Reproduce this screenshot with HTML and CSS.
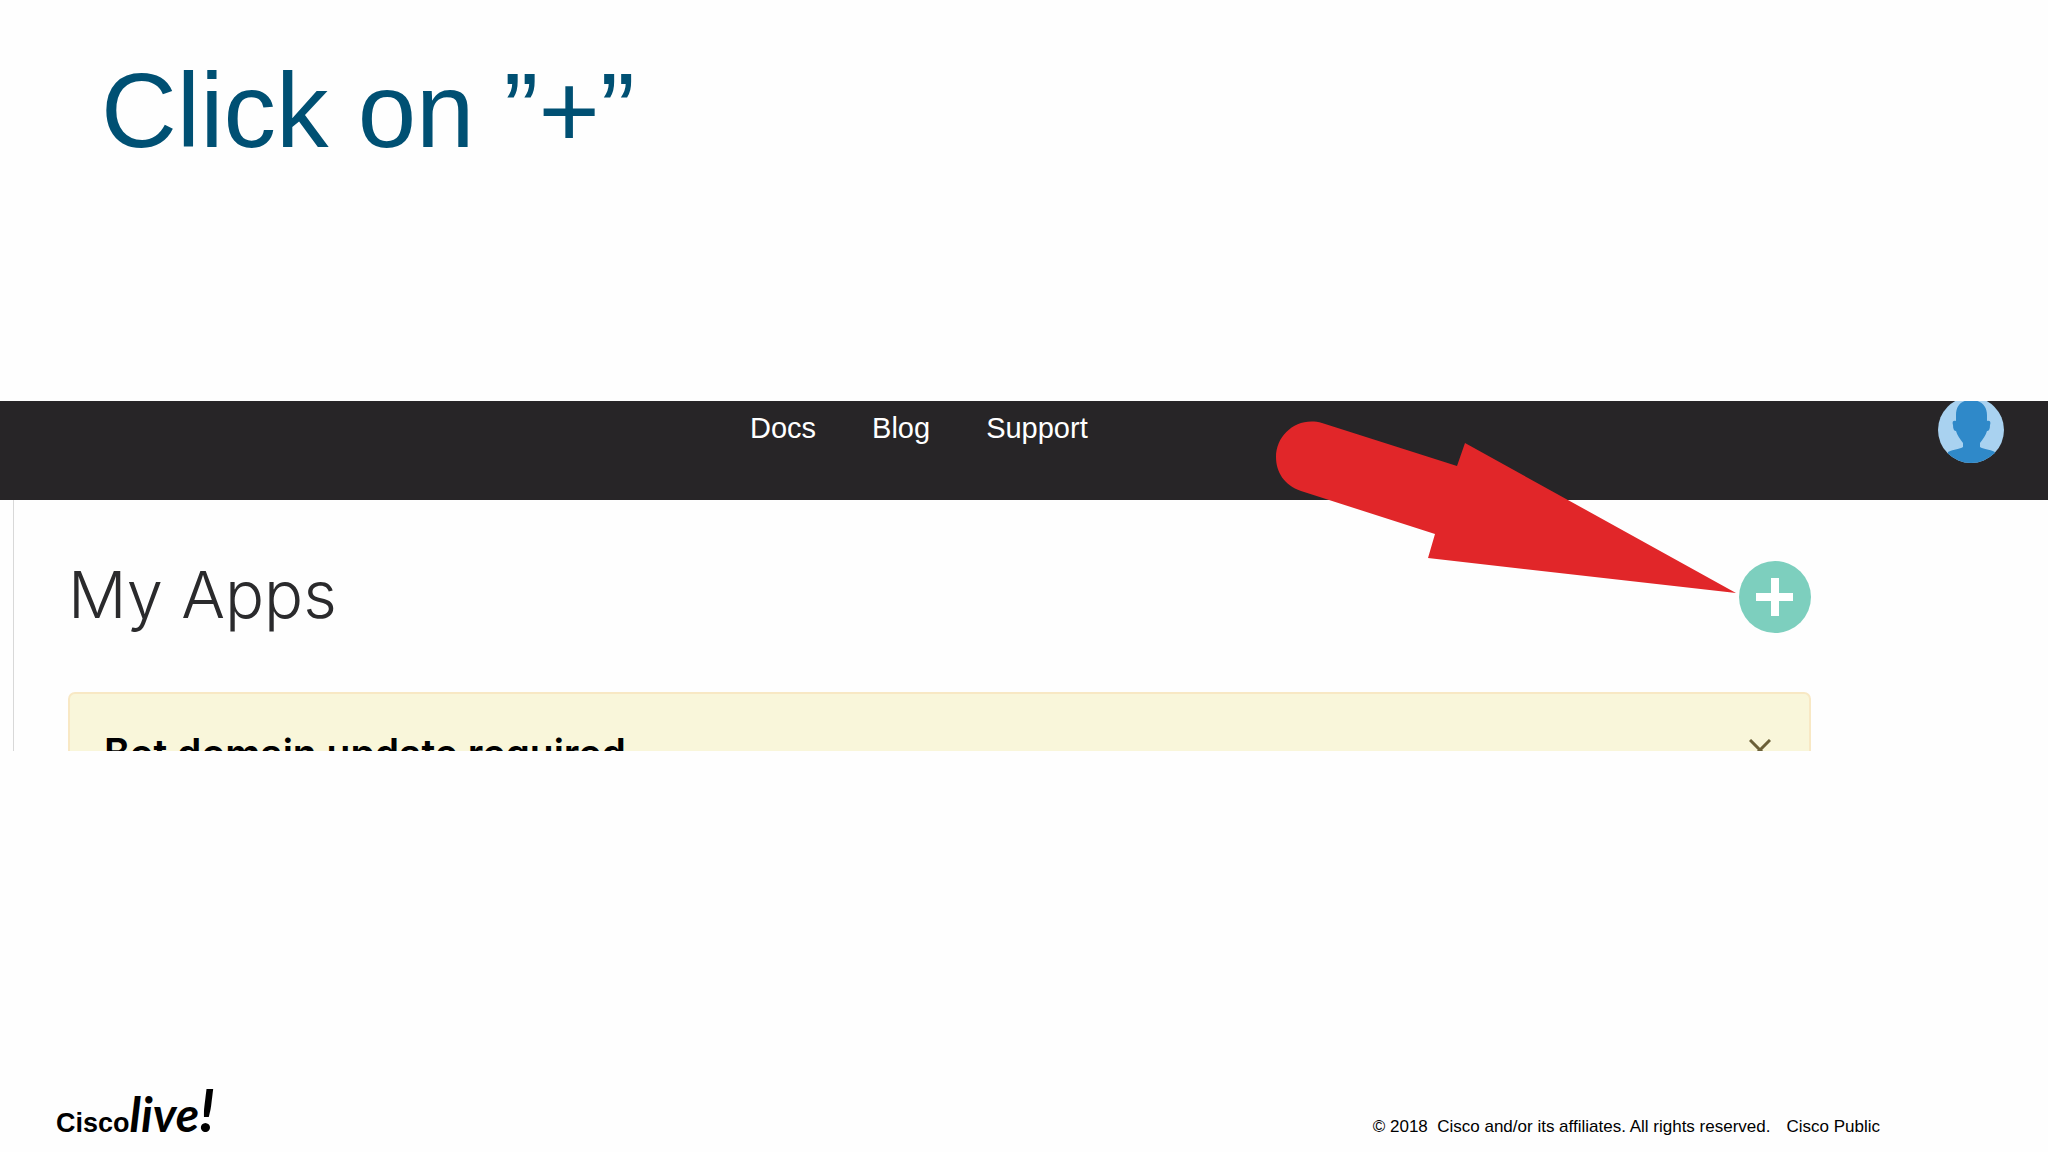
FILE: index.html
```
<!DOCTYPE html>
<html lang="en">
<head>
    <meta charset="UTF-8">
    <meta name="viewport" content="width=device-width, initial-scale=1.0">
    <title>Click on "+"</title>
    <link rel="stylesheet" href="styles.css">
</head>
<body>
    <h1 class="slide-title">Click on ”+”</h1>

    <main class="shot">
        <header class="navbar">
            <nav class="nav-links">
                <a href="#">Docs</a>
                <a href="#">Blog</a>
                <a href="#">Support</a>
            </nav>
            <a href="#" class="profile" aria-label="Profile">
                <svg class="avatar" viewBox="0 0 66 66">
                    <clipPath id="round"><circle cx="33" cy="33" r="33"/></clipPath>
                    <g clip-path="url(#round)">
                        <rect width="66" height="66" fill="#a9d2f0"/>
                        <path fill="#2f89c9" d="M33 3c-10 0-15 6-15 15v6c-3-1-4 1-3 4 0 4 1 6 3 6 1 4 4 8 7 12v4c-3 2-9 2-15 5v12h47V55c-6-3-12-3-15-5v-4c3-4 6-8 7-12 2 0 3-2 3-6 1-3 0-5-3-4v-6c0-9-6-15-16-15z"/>
                    </g>
                </svg>
            </a>
        </header>

        <section class="apps">
            <div class="apps-head">
                <h2>My Apps</h2>
                <button class="add-btn" type="button" aria-label="Add app">
                    <svg viewBox="0 0 72 72"><path fill="#fff" d="M32 17h8v15h14v8H40v15h-8V40H17v-8h15z"/></svg>
                </button>
            </div>
            <div class="alert">
                <h3>Bot domain update required</h3>
                <button class="close-btn" type="button" aria-label="Close">
                    <svg viewBox="0 0 22 22"><path d="M1 1l20 20M21 1L1 21"/></svg>
                </button>
            </div>
        </section>

        <!-- arrow pointing at the add button -->
        <svg class="arrow" viewBox="0 0 460 174">
            <path fill="#e12629" d="M46 2L181 45l8-23L460 172 152 137l7-24L25 70C8 64 0 51 0 36 0 13 22-5 46 2z"/>
        </svg>
    </main>

    <footer class="footer">
        <div class="logo">
            <span class="logo-name">Cisco</span><span class="logo-live">live<b>!</b></span>
        </div>
        <p class="legal"><span>© 2018&nbsp; Cisco and/or its affiliates. All rights reserved.</span><span>Cisco Public</span></p>
    </footer>
</body>
</html>
```
FILE: styles.css
```
* {
    box-sizing: border-box;
}
body {
    margin: 0;
    min-height: 100vh;
    display: flex;
    flex-direction: column;
    background: #fefefe;
    font-family: "Liberation Sans", Arial, sans-serif;
    color: #000;
}
h1, h2, h3, p {
    margin: 0;
    font-weight: 400;
}
button {
    border: none;
    padding: 0;
    cursor: pointer;
}
svg {
    display: block;
}
.slide-title {
    padding: 51px 101px 0;
    height: 401px;
    font-size: 105px;
    line-height: 120px;
    color: #005073;
}
.shot {
    position: relative;
    height: 350px;
    overflow: hidden;
}
.navbar {
    display: flex;
    justify-content: space-between;
    height: 99px;
    padding: 0 44px 0 750px;
    background: #272527;
}
.nav-links {
    display: flex;
    gap: 56px;
    padding-top: 10px;
}
.nav-links a {
    color: #fff;
    font-size: 29px;
    line-height: 34px;
    text-decoration: none;
}
.profile {
    margin-top: -4px;
}
.avatar {
    width: 66px;
    height: 66px;
}
.apps {
    margin-left: 13px;
    padding: 61px 237px 0 54px;
    border-left: 1px solid #d8d8d8;
}
.apps-head {
    display: flex;
    justify-content: space-between;
    margin-bottom: 59px;
}
.apps-head h2 {
    font-family: Inter, sans-serif;
    font-size: 65px;
    font-weight: 300;
    line-height: 68px;
    color: #2a2a2c;
}
.add-btn {
    width: 72px;
    height: 72px;
    border-radius: 50%;
    background: #7dcfbe;
}
.alert {
    display: flex;
    justify-content: space-between;
    padding: 32px 38px 32px 34px;
    border: 2px solid #f8e8c4;
    border-radius: 7px;
    background: #f9f6da;
}
.alert h3 {
    font-family: Inter, sans-serif;
    font-size: 39px;
    font-weight: 600;
    line-height: 54px;
}
.close-btn {
    align-self: flex-start;
    margin-top: 13px;
    background: none;
}
.close-btn svg {
    width: 22px;
    height: 22px;
    fill: none;
    stroke: #6b6038;
    stroke-width: 3;
}
.arrow {
    position: absolute;
    top: 20px;
    right: 312px;
    width: 460px;
    height: 174px;
}
.footer {
    display: flex;
    justify-content: space-between;
    align-items: flex-end;
    margin-top: auto;
    padding: 0 168px 15px 56px;
}
.logo {
    display: flex;
    align-items: baseline;
    line-height: 28px;
}
.logo-name {
    font-size: 27px;
    font-weight: 700;
}
.logo-live {
    font-family: Lato, sans-serif;
    font-size: 48px;
    font-style: italic;
    font-weight: 700;
}
.logo-live b {
    font-size: 60px;
    font-weight: 700;
}
.legal {
    display: flex;
    gap: 16px;
    font-size: 17px;
    line-height: 20px;
}
```
